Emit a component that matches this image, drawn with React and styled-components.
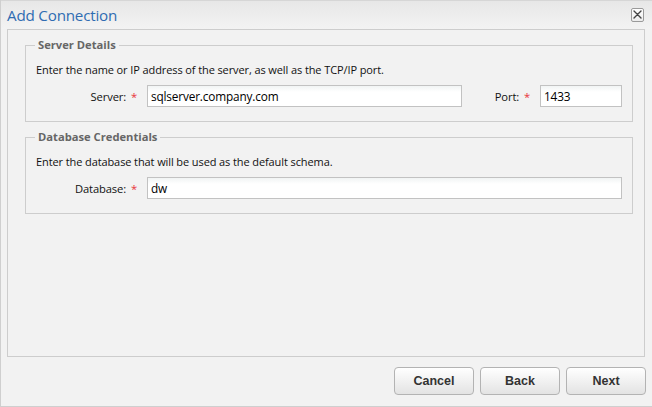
import React from 'react';
import styled, {createGlobalStyle} from 'styled-components';

const GlobalStyle = createGlobalStyle`
  html, body {
    margin: 0;
    padding: 0;
    background: #f2f2f2;
  }
  * {
    box-sizing: border-box;
  }
`

const CloseIcon = () => (
    <svg width="9" height="9" viewBox="0 0 9 9">
        <path d="M1 1 L8 8 M8 1 L1 8" stroke="#444" strokeWidth="1.4" strokeLinecap="round"/>
    </svg>
)

const Required = () => <Star>*</Star>

const App = () => {
    return (
        <>
            <GlobalStyle/>
            <Window>
                <TitleBar>
                    <Title>Add Connection</Title>
                    <CloseButton aria-label="Close"><CloseIcon/></CloseButton>
                </TitleBar>
                <Panel>
                    <Group>
                        <Legend>Server Details</Legend>
                        <Hint>Enter the name or IP address of the server, as well as the TCP/IP port.</Hint>
                        <FieldRow>
                            <Label>Server: <Required/></Label>
                            <Input width="315px" defaultValue="sqlserver.company.com"/>
                            <Label width="68px">Port: <Required/></Label>
                            <Input width="82px" defaultValue="1433"/>
                        </FieldRow>
                    </Group>
                    <Group>
                        <Legend>Database Credentials</Legend>
                        <Hint>Enter the database that will be used as the default schema.</Hint>
                        <FieldRow>
                            <Label>Database: <Required/></Label>
                            <Input defaultValue="dw"/>
                        </FieldRow>
                    </Group>
                </Panel>
                <Footer>
                    <Button>Cancel</Button>
                    <Button>Back</Button>
                    <Button>Next</Button>
                </Footer>
            </Window>
        </>
    );
};

const Window = styled.div`
  height: 100vh;
  display: flex;
  flex-direction: column;
  background: #f2f2f2;
  border-left: 1px solid #cfcfcf;
  border-bottom: 1px solid #cfcfcf;
  font-family: "Open Sans", "Noto Sans", sans-serif;
`

const TitleBar = styled.div`
  height: 29px;
  flex: none;
  display: flex;
  align-items: center;
  justify-content: space-between;
  padding: 0 8px 1px 6px;
  background: linear-gradient(#e7e7e7, #f3f3f3);
  border-top: 1px solid #d6d6d6;
`

const Title = styled.h1`
  margin: 0;
  font-size: 15.2px;
  font-weight: 400;
  color: #2f6cb2;
  letter-spacing: -0.2px;
`

const CloseButton = styled.button`
  width: 13px;
  height: 14px;
  padding: 0;
  display: flex;
  align-items: center;
  justify-content: center;
  border: 1px solid #9a9a9a;
  border-radius: 2px;
  background: linear-gradient(#ffffff, #ececec);
  cursor: pointer;
`

const Panel = styled.div`
  flex: 1;
  margin: 0 7px 0 6px;
  border: 1px solid #cdcdcd;
  background: #f2f2f2;
  padding: 7px 11px 0 17px;
  display: flex;
  flex-direction: column;
  gap: 7px;
`

const Group = styled.fieldset`
  margin: 0;
  border: 1px solid #cdcdcd;
  padding: 9px 10px 14px 10px;
  min-width: 0;
`

const Legend = styled.legend`
  padding: 0 3px;
  margin-left: -1px;
  font-size: 11.2px;
  font-weight: 700;
  color: #666;
  line-height: 16px;
`

const Hint = styled.div`
  font-size: 11px;
  color: #111;
  line-height: 16px;
  margin-bottom: 7px;
  letter-spacing: -0.1px;
`

const FieldRow = styled.div`
  display: flex;
  align-items: center;
`

const Label = styled.label`
  width: ${props => props.width || '101px'};
  flex: none;
  text-align: right;
  margin-right: 10px;
  font-size: 11.2px;
  color: #111;
  letter-spacing: -0.1px;
`

const Star = styled.span`
  color: #e8343a;
  margin-left: 2px;
`

const Input = styled.input`
  width: ${props => props.width || 'auto'};
  flex: ${props => props.width ? 'none' : '1'};
  min-width: 0;
  height: 22px;
  padding: 0 5px 0 3px;
  border: 1px solid #c2c2c2;
  background: linear-gradient(#f1f4f4, #ffffff 6px);
  font-family: "Open Sans", "Noto Sans", sans-serif;
  font-size: 11.8px;
  color: #000;
  outline: none;
  letter-spacing: -0.15px;
`

const Footer = styled.div`
  height: 49px;
  flex: none;
  display: flex;
  justify-content: flex-end;
  align-items: flex-start;
  gap: 6px;
  padding: 10px 6px 0 0;
`

const Button = styled.button`
  width: 80px;
  height: 28px;
  border: 1px solid #b3b3b3;
  border-radius: 4px;
  background: linear-gradient(#ffffff, #e3e3e3);
  font-family: "Liberation Sans", Arial, sans-serif;
  font-size: 12.5px;
  font-weight: 700;
  color: #333;
  cursor: pointer;
`

export default App;
